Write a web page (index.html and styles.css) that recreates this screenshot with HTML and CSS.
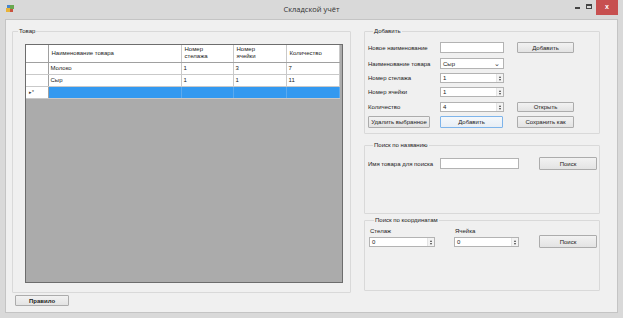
FILE: index.html
```html
<!DOCTYPE html>
<html lang="ru">
<head>
<meta charset="utf-8">
<title>Складской учёт</title>
<link rel="stylesheet" href="styles.css">
</head>
<body>
<div class="window">
  <div class="titlebar">
    <div class="tb-left">
      <svg class="appicon" width="9" height="9" viewBox="0 0 9 9">
        <rect x="0" y="4" width="4" height="4" fill="#e8b338"/>
        <rect x="4" y="1" width="4" height="4" fill="#6aa84f"/>
        <rect x="1" y="1" width="3" height="3" fill="#4a86c8"/>
        <rect x="4" y="5" width="3" height="3" fill="#c9523f"/>
      </svg>
    </div>
    <div class="title">Складской учёт</div>
    <div class="controls">
      <span class="ctl-min"></span>
      <span class="ctl-max"></span>
      <span class="ctl-close">x</span>
    </div>
  </div>
  <div class="client">
    <div class="left">
      <fieldset class="group group-goods">
        <legend>Товар</legend>
        <div class="grid">
          <table class="dgv">
            <colgroup>
              <col class="c-rh"><col class="c-name"><col class="c-rack"><col class="c-cell"><col class="c-qty">
            </colgroup>
            <thead>
              <tr>
                <th class="rh"></th>
                <th>Наименование товара</th>
                <th>Номер<br>стелажа</th>
                <th>Номер<br>ячейки</th>
                <th>Количество</th>
              </tr>
            </thead>
            <tbody>
              <tr><td class="rh"></td><td>Молоко</td><td>1</td><td>3</td><td>7</td></tr>
              <tr><td class="rh"></td><td>Сыр</td><td>1</td><td>1</td><td>11</td></tr>
              <tr class="newrow"><td class="rh">▸*</td><td></td><td></td><td></td><td></td></tr>
            </tbody>
          </table>
        </div>
      </fieldset>
      <button class="btn btn-rule">Правило</button>
    </div>
    <div class="right">
      <fieldset class="group group-add">
        <legend>Добавить</legend>
        <div class="row r1">
          <span class="lbl">Новое наименование</span>
          <span class="tb w64"></span>
          <button class="btn b-side">Добавить</button>
        </div>
        <div class="row r2">
          <span class="lbl">Наименование товара</span>
          <span class="tb w64 combo"><span>Сыр</span><span class="chev">⌄</span></span>
        </div>
        <div class="row r3">
          <span class="lbl">Номер стелажа</span>
          <span class="tb w64 num"><span>1</span><span class="spin"><i class="up"></i><i class="dn"></i></span></span>
        </div>
        <div class="row r4">
          <span class="lbl">Номер ячейки</span>
          <span class="tb w64 num"><span>1</span><span class="spin"><i class="up"></i><i class="dn"></i></span></span>
        </div>
        <div class="row r5">
          <span class="lbl">Количество</span>
          <span class="tb w64 num"><span>4</span><span class="spin"><i class="up"></i><i class="dn"></i></span></span>
          <button class="btn b-side">Открыть</button>
        </div>
        <div class="row r6">
          <button class="btn b-del">Удалить выбранное</button>
          <button class="btn b-add focus">Добавить</button>
          <button class="btn b-side">Сохранить как</button>
        </div>
      </fieldset>
      <fieldset class="group group-name">
        <legend>Поиск по названию</legend>
        <div class="row rs">
          <span class="lbl">Имя товара для поиска</span>
          <span class="tb w79"></span>
          <button class="btn b-search">Поиск</button>
        </div>
      </fieldset>
      <fieldset class="group group-coords">
        <legend>Поиск по координатам</legend>
        <div class="coords">
          <div class="cfield">
            <span class="clbl">Стелаж</span>
            <span class="tb w66 num"><span>0</span><span class="spin"><i class="up"></i><i class="dn"></i></span></span>
          </div>
          <div class="cfield">
            <span class="clbl">Ячейка</span>
            <span class="tb w65 num"><span>0</span><span class="spin"><i class="up"></i><i class="dn"></i></span></span>
          </div>
          <button class="btn b-search b-search2">Поиск</button>
        </div>
      </fieldset>
    </div>
  </div>
</div>
</body>
</html>
```

FILE: styles.css
```css
* { box-sizing: border-box; }
html, body { margin: 0; padding: 0; }
body {
  font-family: "Liberation Sans", Arial, sans-serif;
  font-size: 6px;
  color: #222;
  background: #d9d9d9;
}
.window {
  width: 623px;
  height: 318px;
  background: #d9d9d9;
  display: flex;
  flex-direction: column;
  overflow: hidden;
}
.titlebar {
  height: 19px;
  display: grid;
  grid-template-columns: 1fr auto 1fr;
  align-items: start;
}
.tb-left { padding: 4px 0 0 6px; }
.appicon { display: block; }
.title {
  font-family: "Open Sans", "Liberation Sans", sans-serif;
  font-size: 7.5px;
  line-height: 10px;
  padding-top: 4px;
  color: #333;
}
.controls {
  justify-self: end;
  display: flex;
  align-items: flex-start;
  padding-right: 5px;
}
.ctl-min {
  width: 5px; height: 2px;
  background: #444;
  margin: 7px 6px 0 0;
}
.ctl-max {
  width: 6px; height: 5px;
  border: 1px solid #444;
  border-top-width: 2px;
  margin: 4px 4px 0 0;
}
.ctl-close {
  width: 22px; height: 15px;
  background: #c75050;
  color: #fff;
  font-size: 7px;
  font-weight: bold;
  text-align: center;
  line-height: 14px;
}
.client {
  flex: 1;
  margin: 0 5px 5px 5px;
  background: #f0f0f0;
  border: 1px solid #c4c4c4;
  display: flex;
  align-items: flex-start;
}
.left {
  margin-left: 6px;
  padding-top: 7px;
  width: 339px;
  display: flex;
  flex-direction: column;
}
.right {
  margin-left: 13px;
  padding-top: 7px;
  width: 236px;
  display: flex;
  flex-direction: column;
}
.group {
  margin: 0;
  padding: 0;
  border: 1px solid #d9d9d9;
  border-radius: 1px;
  min-width: 0;
}
.group legend {
  padding: 0 1px;
  margin-left: 5px;
  font-size: 6px;
  line-height: 8px;
  color: #222;
}
.group-goods { height: 266px; }
.grid {
  margin: 9px 0 0 12px;
  width: 318px;
  height: 239px;
  background: #ababab;
  border: 1px solid #6d6d6d;
}
.dgv {
  border-collapse: collapse;
  table-layout: fixed;
  width: 313px;
  font-size: 6px;
}
.c-rh { width: 22px; }
.c-name { width: 133px; }
.c-rack { width: 52px; }
.c-cell { width: 53px; }
.c-qty { width: 53px; }
.dgv th {
  height: 17px;
  background: #fff;
  font-weight: normal;
  text-align: left;
  padding: 0 0 0 3px;
  line-height: 7px;
  border-right: 1px solid #c9c9c9;
  border-bottom: 1px solid #a0a0a0;
  vertical-align: middle;
}
.dgv td {
  height: 12px;
  background: #fff;
  padding: 0 0 0 2px;
  border-right: 1px solid #c9c9c9;
  border-bottom: 1px solid #c9c9c9;
  white-space: nowrap;
}
.dgv .rh {
  background: #fff;
  border-right: 1px solid #a0a0a0;
  font-size: 5px;
  padding-left: 3px;
}
.dgv .newrow td { background: #3399f0; border-right-color: #5aaaf0; }
.dgv .newrow td.rh { background: #fff; color: #333; border-right-color: #a0a0a0; }

.btn {
  font-family: "Liberation Sans", Arial, sans-serif;
  font-size: 6px;
  color: #222;
  background: linear-gradient(#f2f2f2, #e3e3e3);
  border: 1px solid #acacac;
  border-radius: 1px;
  padding: 0;
  margin: 0;
  display: flex;
  align-items: center;
  justify-content: center;
}
.btn-rule {
  margin: 2px 0 0 3px;
  width: 54px;
  height: 11px;
  font-weight: bold;
}
.group-add { height: 107px; padding: 7px 0 0 3px; }
.row {
  display: flex;
  align-items: center;
}
.lbl { width: 72px; white-space: nowrap; }
.tb {
  background: #fff;
  border: 1px solid #b3b3b3;
  display: flex;
  align-items: center;
  padding-left: 2px;
}
.w64 { width: 64px; }
.w79 { width: 79px; height: 11px; }
.w66 { width: 66px; }
.w65 { width: 65px; }
.r1 { height: 11px; margin-bottom: 5px; }
.r1 .tb { height: 11px; }
.r2 { height: 11px; margin-bottom: 4px; }
.r2 .tb { height: 11px; }
.r3, .r4, .r5 { height: 10px; }
.r3 { margin-bottom: 4px; }
.r4 { margin-bottom: 5px; }
.r5 { margin-bottom: 4px; }
.r3 .tb, .r4 .tb, .r5 .tb { height: 10px; }
.r6 { height: 12px; }
.b-side { width: 57px; height: 11px; margin-left: 13px; }
.r5 .b-side { height: 10px; }
.r6 .btn { height: 12px; }
.b-del { width: 62px; margin-right: 10px; }
.b-add { width: 63px; }
.r6 .b-side { margin-left: 14px; }
.btn.focus { border-color: #7eb4ea; background: linear-gradient(#f4f8fc, #e8eef5); }
.combo { justify-content: space-between; padding-right: 3px; }
.chev { font-size: 7px; line-height: 6px; color: #333; }
.num { justify-content: space-between; padding-right: 0; }
.spin {
  width: 7px;
  height: 100%;
  border-left: 1px solid #e4e4e4;
  background: #f3f3f3;
  display: flex;
  flex-direction: column;
  align-items: center;
  justify-content: center;
  gap: 1px;
}
.spin i { width: 0; height: 0; border-left: 1.5px solid transparent; border-right: 1.5px solid transparent; }
.spin .up { border-bottom: 2px solid #444; }
.spin .dn { border-top: 2px solid #444; }

.group-name { height: 73px; margin-top: 7px; padding: 8px 0 0 3px; }
.rs { height: 13px; }
.rs .lbl { width: 72px; }
.b-search { width: 58px; height: 13px; margin-left: 20px; }
.group-coords { height: 75px; margin-top: 2px; padding: 3px 0 0 4px; }
.coords { display: flex; align-items: flex-end; }
.cfield { display: flex; flex-direction: column; margin-right: 19px; }
.cfield:nth-child(2) { margin-right: 20px; }
.clbl { line-height: 8px; height: 10px; padding-left: 1px; }
.cfield .tb { height: 10px; }
.b-search2 { margin-left: 0; margin-bottom: -1px; }
```
